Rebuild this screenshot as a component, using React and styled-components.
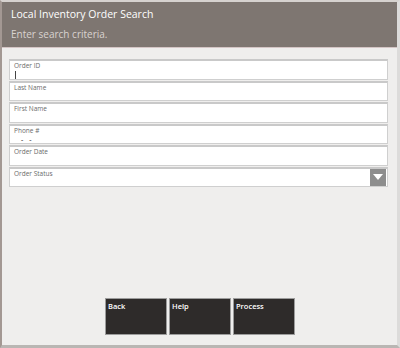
import React from "react";
import styled, { createGlobalStyle } from "styled-components";

const GlobalStyle = createGlobalStyle`
  html, body {
    margin: 0;
    padding: 0;
    background: #efeeed;
  }
  body {
    font-family: "Open Sans", "Noto Sans", sans-serif;
  }
`;

const Screen = styled.div`
  box-sizing: border-box;
  width: 400px;
  height: 348px;
  display: flex;
  flex-direction: column;
  background: #efeeed;
  border-top: 2px solid #d6d2cf;
  border-left: 2px solid #a39893;
  border-right: 3px solid #dcdbda;
  border-bottom: 3px solid #b9b6b3;
`;

const Header = styled.header`
  height: 45px;
  background: #7e7671;
  border-bottom: 1px solid #d4c5c5;
  padding: 0 0 0 9px;
  display: flex;
  flex-direction: column;
  justify-content: center;
  gap: 7px;
`;

const Title = styled.div`
  color: #ffffff;
  font-size: 10.5px;
  line-height: 13px;
`;

const Subtitle = styled.div`
  color: #d9d3d0;
  font-size: 10px;
  line-height: 13px;
`;

const Body = styled.main`
  flex: 1;
  display: flex;
  flex-direction: column;
  padding: 11px 9px 10px 7px;
`;

const Fields = styled.div`
  display: flex;
  flex-direction: column;
  gap: 1px;
`;

const Field = styled.div`
  box-sizing: border-box;
  position: relative;
  height: 20.5px;
  background: #ffffff;
  border: 1px solid #cfcfcf;
  border-top: 2px solid #c9c9c9;
  padding: 1px 0 0 4px;
`;

const Label = styled.div`
  color: #6a6a6a;
  font-size: 6.5px;
  line-height: 7.5px;
`;

const Cursor = styled.div`
  width: 1px;
  height: 8px;
  margin: 1px 0 0 1px;
  background: #444;
`;

const PhoneMask = styled.div`
  display: flex;
  gap: 6px;
  color: #555;
  font-size: 7px;
  font-weight: 600;
  line-height: 7px;
  margin-top: 1.8px;
  padding-left: 7px;
`;

const DropButton = styled.div`
  position: absolute;
  right: 1px;
  top: 0;
  width: 16px;
  height: 17px;
  background: #8d8d8d;
  display: flex;
  align-items: center;
  justify-content: center;
`;

const Actions = styled.div`
  margin-top: auto;
  display: flex;
  justify-content: center;
  gap: 2px;
  padding-left: 3px;
`;

const ActionButton = styled.button`
  box-sizing: border-box;
  width: 62px;
  height: 37px;
  background: #2e2b2a;
  border: 1px solid #9c9c9c;
  color: #ffffff;
  font-family: "Open Sans", "Noto Sans", sans-serif;
  font-size: 7.5px;
  font-weight: 600;
  text-align: left;
  padding: 2px 2px;
  display: flex;
  align-items: flex-start;
`;

const fields = ["Order ID", "Last Name", "First Name", "Phone #", "Order Date"];

export default function App() {
  return (
    <>
      <GlobalStyle />
      <Screen>
        <Header>
          <Title>Local Inventory Order Search</Title>
          <Subtitle>Enter search criteria.</Subtitle>
        </Header>
        <Body>
          <Fields>
            {fields.map((f) => (
              <Field key={f}>
                <Label>{f}</Label>
                {f === "Order ID" && <Cursor />}
                {f === "Phone #" && (
                  <PhoneMask>
                    <span>-</span>
                    <span>-</span>
                  </PhoneMask>
                )}
              </Field>
            ))}
            <Field>
              <Label>Order Status</Label>
              <DropButton>
                <svg width="10" height="6" viewBox="0 0 10 6">
                  <path d="M0 0 L10 0 L5 6 Z" fill="#ffffff" />
                </svg>
              </DropButton>
            </Field>
          </Fields>
          <Actions>
            <ActionButton>Back</ActionButton>
            <ActionButton>Help</ActionButton>
            <ActionButton>Process</ActionButton>
          </Actions>
        </Body>
      </Screen>
    </>
  );
}
